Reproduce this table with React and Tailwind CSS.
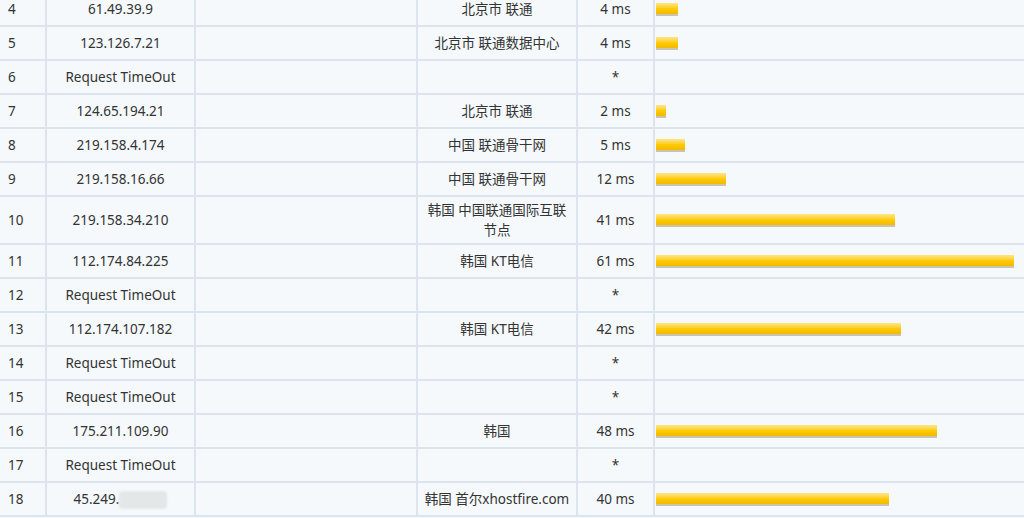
const rows = [
  { n: 4, ip: "61.49.39.9", loc: "北京市 联通", ms: "4 ms", w: 22 },
  { n: 5, ip: "123.126.7.21", loc: "北京市 联通数据中心", ms: "4 ms", w: 22 },
  { n: 6, ip: "Request TimeOut", loc: "", ms: "*", w: 0 },
  { n: 7, ip: "124.65.194.21", loc: "北京市 联通", ms: "2 ms", w: 10 },
  { n: 8, ip: "219.158.4.174", loc: "中国 联通骨干网", ms: "5 ms", w: 29 },
  { n: 9, ip: "219.158.16.66", loc: "中国 联通骨干网", ms: "12 ms", w: 70 },
  { n: 10, ip: "219.158.34.210", loc: "韩国 中国联通国际互联节点", ms: "41 ms", w: 239 },
  { n: 11, ip: "112.174.84.225", loc: "韩国 KT电信", ms: "61 ms", w: 358 },
  { n: 12, ip: "Request TimeOut", loc: "", ms: "*", w: 0 },
  { n: 13, ip: "112.174.107.182", loc: "韩国 KT电信", ms: "42 ms", w: 245 },
  { n: 14, ip: "Request TimeOut", loc: "", ms: "*", w: 0 },
  { n: 15, ip: "Request TimeOut", loc: "", ms: "*", w: 0 },
  { n: 16, ip: "175.211.109.90", loc: "韩国", ms: "48 ms", w: 281 },
  { n: 17, ip: "Request TimeOut", loc: "", ms: "*", w: 0 },
  { n: 18, ip: "45.249.", blur: true, loc: "韩国 首尔xhostfire.com", ms: "40 ms", w: 233 },
]

function Bar({ w }) {
  if (!w) return null
  return (
    <div
      className="h-[13px] border-b-2 border-[#c9c4b0] bg-gradient-to-b from-[#ffe680] via-[#ffcc00] to-[#f2b900]"
      style={{ width: w }}
    />
  )
}

export default function App() {
  return (
    <div className="w-[1024px] h-[518px] overflow-hidden bg-[#f5f9fb] text-[#333] text-[13.5px]" style={{ fontFamily: '"Noto Sans", "Noto Sans CJK SC", sans-serif' }}>
      <table className="w-[1024px] table-fixed border-collapse -mt-[9px]">
        <colgroup>
          <col className="w-[46px]" />
          <col className="w-[149px]" />
          <col className="w-[222px]" />
          <col className="w-[160px]" />
          <col className="w-[77px]" />
          <col />
        </colgroup>
        <tbody>
          {rows.map((r) => (
            <tr key={r.n} className="border-y-2 border-[#dce5ee]">
              <td className="h-[34px] pl-[8px] border-x-2 border-[#dce5ee] border-l-0">{r.n}</td>
              <td className="text-center border-x-2 border-[#dce5ee]">
                {r.ip}
                {r.blur && <span className="inline-block align-middle w-[48px] h-[18px] bg-[#e4e7e8] rounded-sm blur-[1px]" />}
              </td>
              <td className="border-x-2 border-[#dce5ee]"></td>
              <td className="text-center leading-[20px] px-[6px] py-[3px] border-x-2 border-[#dce5ee]">{r.loc}</td>
              <td className="text-center border-x-2 border-[#dce5ee]">{r.ms}</td>
              <td className="pl-[1px] border-x-2 border-[#dce5ee] border-r-0">
                <Bar w={r.w} />
              </td>
            </tr>
          ))}
        </tbody>
      </table>
    </div>
  )
}
